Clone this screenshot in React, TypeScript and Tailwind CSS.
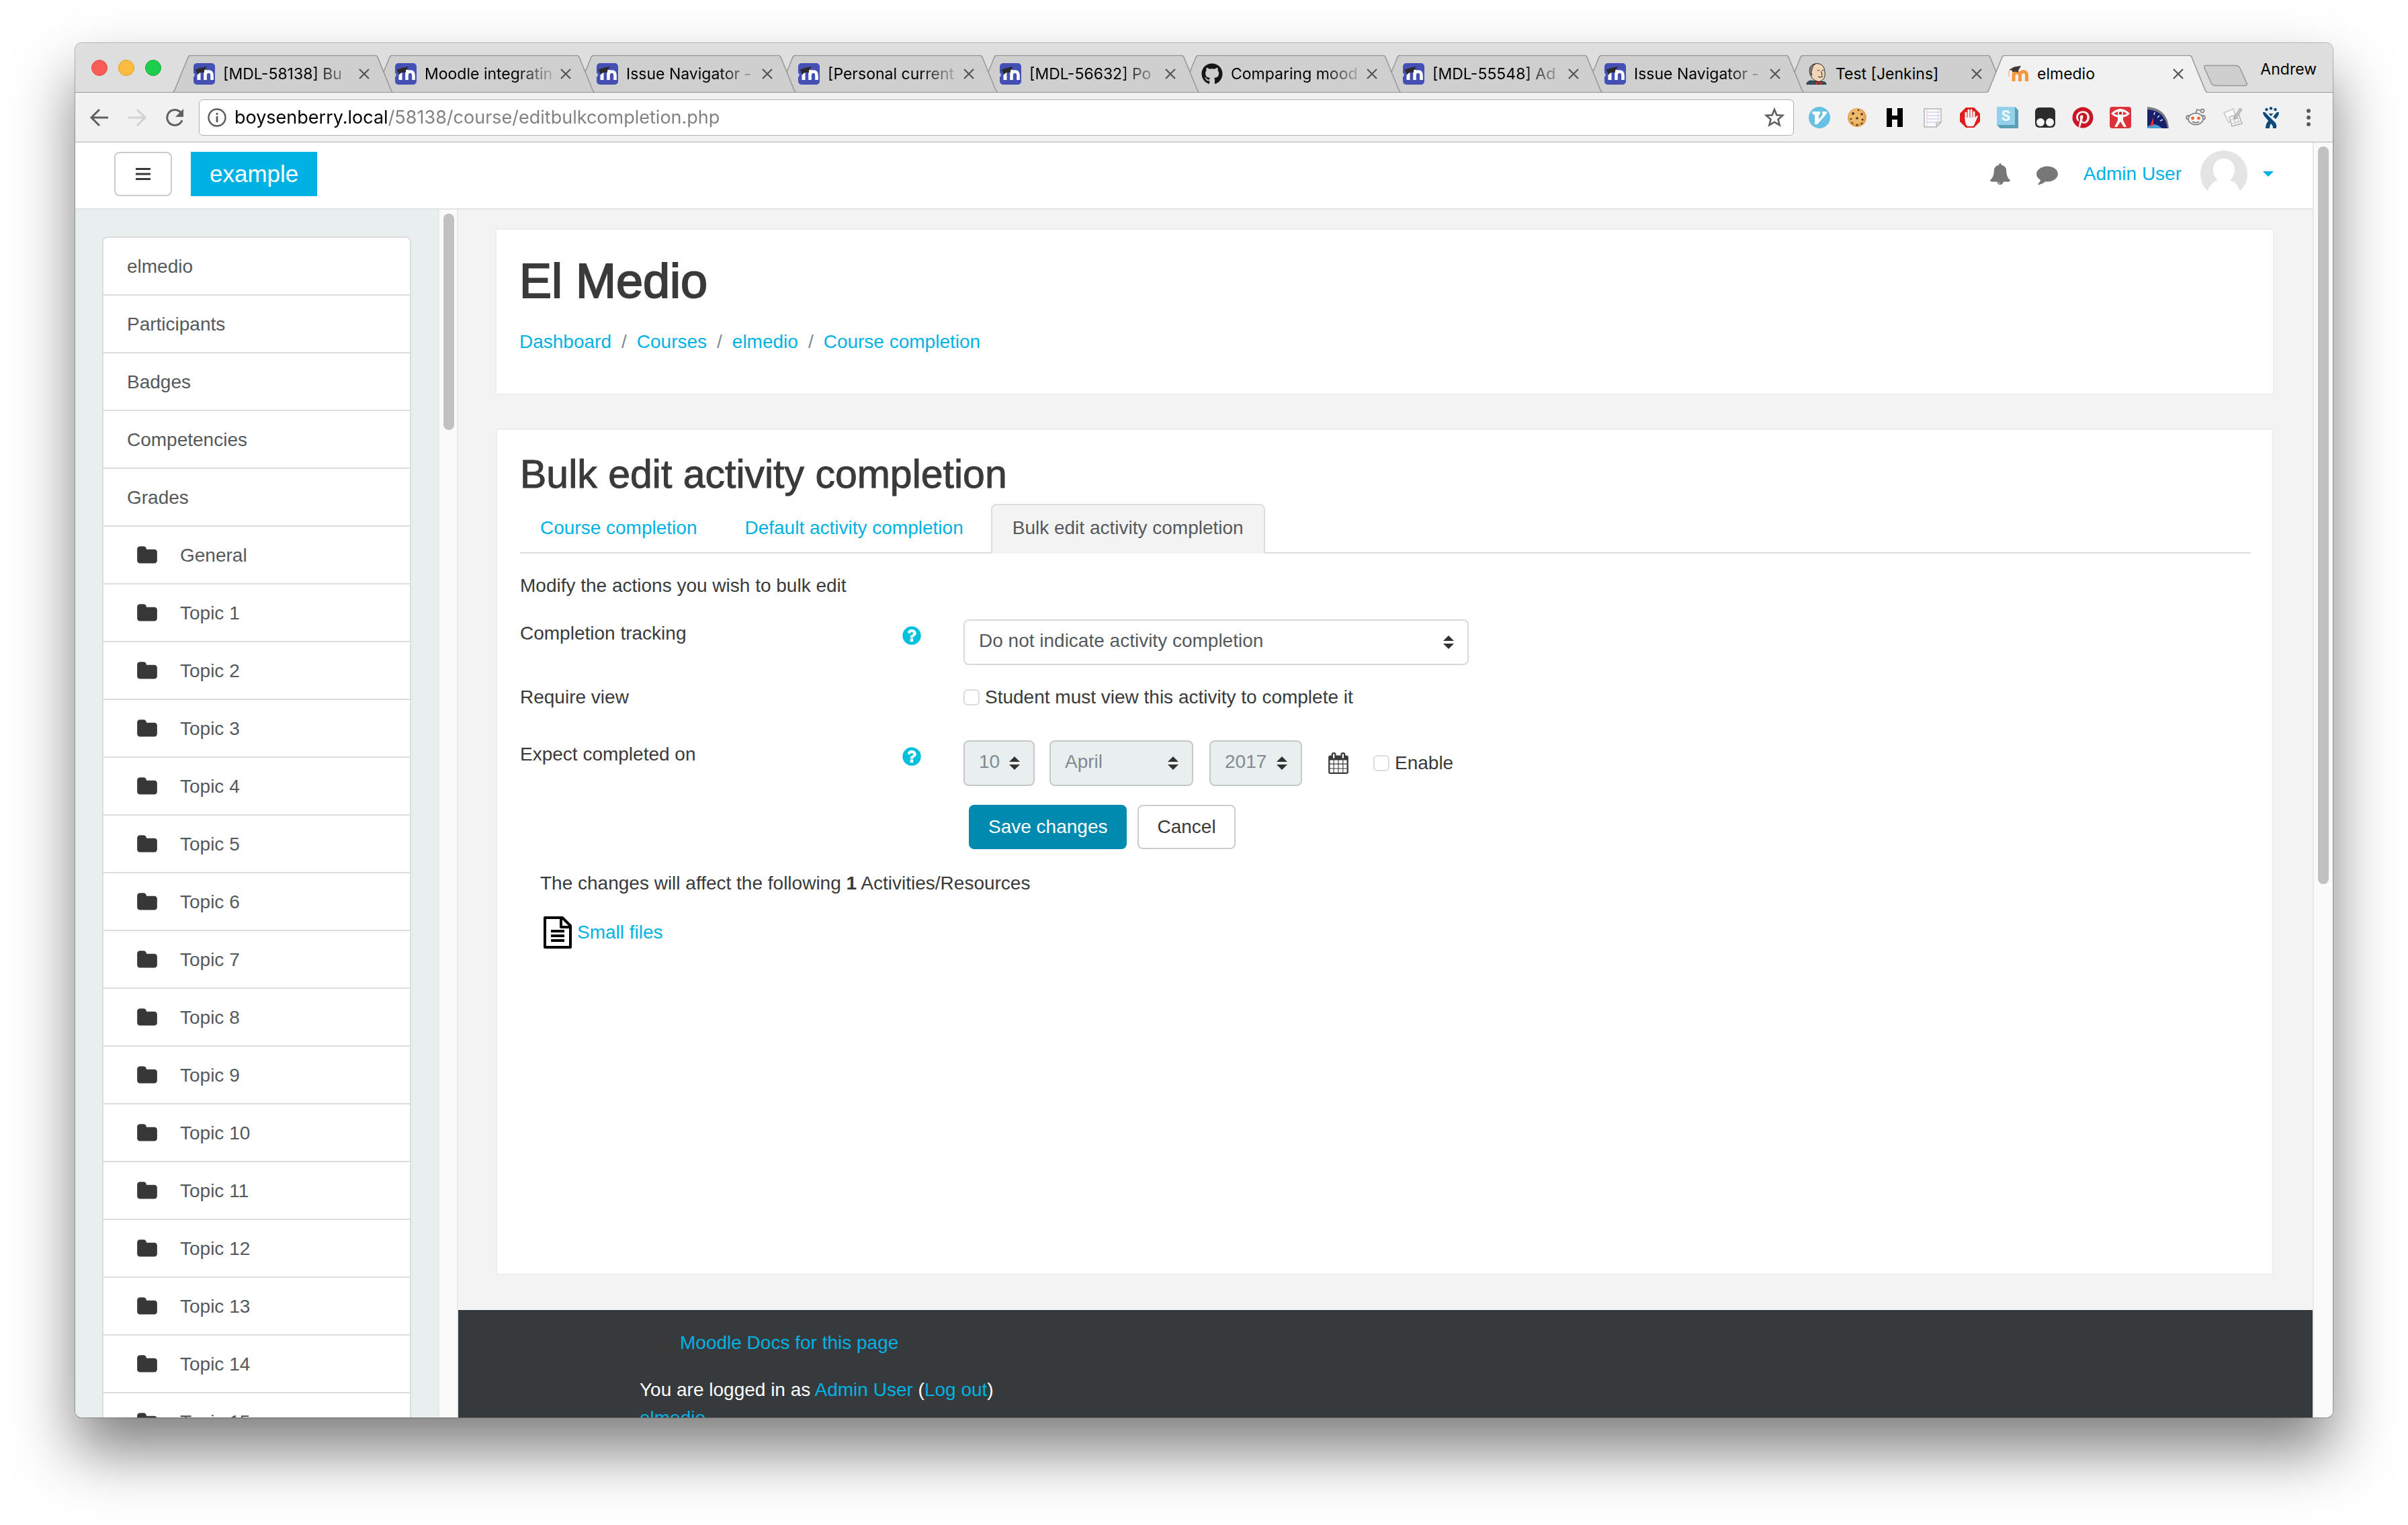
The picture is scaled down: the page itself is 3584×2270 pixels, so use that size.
import type { ReactNode } from 'react';
import { FaGithub, FaPinterest } from 'react-icons/fa';

const UI_FONT = "font-['Inter','Roboto',sans-serif]";

const TABS = [
  { title: '[MDL-58138] Bu', icon: 'tracker' },
  { title: 'Moodle integratin', icon: 'tracker' },
  { title: 'Issue Navigator -', icon: 'tracker' },
  { title: '[Personal current', icon: 'tracker' },
  { title: '[MDL-56632] Po', icon: 'tracker' },
  { title: 'Comparing mood', icon: 'github' },
  { title: '[MDL-55548] Ad', icon: 'tracker' },
  { title: 'Issue Navigator -', icon: 'tracker' },
  { title: 'Test [Jenkins]', icon: 'jenkins', short: true },
  { title: 'elmedio', icon: 'moodle', short: true, active: true },
];

const COURSE_LINKS = ['elmedio', 'Participants', 'Badges', 'Competencies', 'Grades'];
const SECTIONS = ['General', ...Array.from({ length: 15 }, (_, i) => `Topic ${i + 1}`)];
const BREADCRUMBS = ['Dashboard', 'Courses', 'elmedio', 'Course completion'];

/* ---------- icons ---------- */

function Glyph({ d, className }: { d: string; className?: string }) {
  return (
    <svg viewBox="0 0 1792 1792" className={`w-8 h-8 shrink-0 ${className ?? ''}`} fill="currentColor" aria-hidden="true">
      <path d={d} />
    </svg>
  );
}

const FOLDER = 'M1728 608v704q0 92-66 158t-158 66h-1216q-92 0-158-66t-66-158v-960q0-92 66-158t158-66h320q92 0 158 66t66 158v32h672q92 0 158 66t66 158z';
const BELL = 'M912 1696q0-16-16-16-59 0-101.5-42.5t-42.5-101.5q0-16-16-16t-16 16q0 73 51.5 124.5t124.5 51.5q16 0 16-16zm816-288q0 52-38 90t-90 38h-448q0 106-75 181t-181 75-181-75-75-181h-448q-52 0-90-38t-38-90q50-42 91-88t85-119.5 74.5-158.5 50-206 19.5-260q0-152 117-282.5t307-158.5q-8-19-8-39 0-40 28-68t68-28 68 28 28 68q0 20-8 39 190 28 307 158.5t117 282.5q0 139 19.5 260t50 206 74.5 158.5 85 119.5 91 88z';
const COMMENT = 'M1792 896q0 174-120 321.5t-326 233-450 85.5q-70 0-145-8-198 175-460 242-49 14-114 22-17 2-30.5-9t-17.5-29v-1q-3-4-.5-12t2-10 4.5-9.5l6-9 7-8.5 8-9q7-8 31-34.5t34.5-38 31-39.5 32.5-51 27-59 26-76q-157-89-247.5-220t-90.5-281q0-130 71-248.5t191-204.5 286-136.5 348-50.5q244 0 450 85.5t326 233 120 321.5z';
const HELP = 'M1024 1376v-192q0-14-9-23t-23-9h-192q-14 0-23 9t-9 23v192q0 14 9 23t23 9h192q14 0 23-9t9-23zm256-672q0-88-55.5-163t-138.5-116-170-41q-243 0-371 213-15 24 8 42l132 100q7 6 19 6 16 0 25-12 53-68 86-92 34-24 86-24 48 0 85.5 26t37.5 59q0 38-20 61t-68 45q-63 28-115.5 86.5t-52.5 125.5v36q0 14 9 23t23 9h192q14 0 23-9t9-23q0-19 21.5-49.5t54.5-49.5q32-18 49-28.5t46-35 44.5-48 28-60.5 12.5-81zm384 192q0 209-103 385.5t-279.5 279.5-385.5 103-385.5-103-279.5-279.5-103-385.5 103-385.5 279.5-279.5 385.5-103 385.5 103 279.5 279.5 103 385.5z';
const CALENDAR = 'M192 1664h288v-288h-288v288zm352 0h320v-288h-320v288zm-352-352h288v-320h-288v320zm352 0h320v-320h-320v320zm-352-384h288v-288h-288v288zm736 736h320v-288h-320v288zm-384-736h320v-288h-320v288zm768 736h288v-288h-288v288zm-384-352h320v-320h-320v320zm-352-864v-288q0-13-9.5-22.5t-22.5-9.5h-64q-13 0-22.5 9.5t-9.5 22.5v288q0 13 9.5 22.5t22.5 9.5h64q13 0 22.5-9.5t9.5-22.5zm736 864h288v-320h-288v320zm-384-384h320v-288h-320v288zm384 0h288v-288h-288v288zm32-480v-288q0-13-9.5-22.5t-22.5-9.5h-64q-13 0-22.5 9.5t-9.5 22.5v288q0 13 9.5 22.5t22.5 9.5h64q13 0 22.5-9.5t9.5-22.5zm384-64v1280q0 52-38 90t-90 38h-1408q-52 0-90-38t-38-90v-1280q0-52 38-90t90-38h128v-96q0-66 47-113t113-47h64q66 0 113 47t47 113v96h384v-96q0-66 47-113t113-47h64q66 0 113 47t47 113v96h128q52 0 90 38t38 90z';

function Svg32({ children }: { children: ReactNode }) {
  return <svg viewBox="0 0 32 32" className="w-8 h-8 shrink-0" aria-hidden="true">{children}</svg>;
}

function TrackerIcon() {
  return (
    <Svg32>
      <rect width="32" height="32" rx="5" fill="#4550b5" />
      <rect x="5.500" y="14" width="5" height="11" fill="#fff" />
      <path d="M17.500 25V10M17.500 18.500q0-6 5-6t5 6V25" fill="none" stroke="#fff" strokeWidth="4.600" />
      <rect x="0" y="15" width="1.500" height="5" fill="#c9cdf0" />
      <path d="M2 10 10 7l10-2-4 6v3q-6-1-9 2l-1 2-2-6z" fill="#2c2a2c" />
    </Svg32>
  );
}

function MoodleIcon() {
  return (
    <Svg32>
      <path d="M9 27V17.500a5 5 0 0 1 9.500 0V27M18.500 17.500a5 5 0 0 1 10 0V27" fill="none" stroke="#f7963a" strokeWidth="5" />
      <path d="M2 10 10 5.500 20 4l-4 7v3q-5-3-9 0v-3z" fill="#3f3a38" />
      <path d="M3 11q-2 5-1 9" fill="none" stroke="#f3c3a8" strokeWidth="2" />
    </Svg32>
  );
}

function JenkinsIcon() {
  return (
    <Svg32>
      <path d="M1 32q0-5 6-6l7 1h7l7 1q2 1 2 4z" fill="#335061" stroke="#1d2a33" />
      <path d="M6 15Q4 1 16 .500q11 0 12 12 1 8-2 11-5 6-11 3Q8 24 6 15z" fill="#f0d6b7" stroke="#2b2320" />
      <path d="M6 17Q2 3 14 1q-5 4-5 9l-1 3 1 5z" fill="#807d7b" stroke="#2b2320" strokeWidth=".8" />
      <path d="M17 11q2-1 3 0M24 11q1-1 2 0M22 12q3 4 1 6M18 20q4 2 7-1" fill="none" stroke="#4b3b30" strokeWidth="1.200" />
      <path d="M14 27l5 2 5-2v5l-5-2-5 2z" fill="#d33833" stroke="#7a1512" strokeWidth=".6" />
    </Svg32>
  );
}

function Favicon({ name }: { name: string }) {
  if (name === 'github') return <FaGithub className="w-8 h-8 shrink-0 text-[#161514]" />;
  if (name === 'jenkins') return <JenkinsIcon />;
  if (name === 'moodle') return <MoodleIcon />;
  return <TrackerIcon />;
}

const EXTENSIONS: { name: string; art: ReactNode }[] = [
  {
    name: 'Vimium',
    art: (
      <>
        <circle cx="16" cy="16" r="16" fill="#66c1e4" />
        <path d="M5 7h12v4l-2 1v7l6-8-1-1V7h7v3L13 26H9V12L6 11z" fill="#fff" />
      </>
    ),
  },
  {
    name: 'Cookies',
    art: (
      <>
        <circle cx="16" cy="16" r="14" fill="#e2a355" />
        <circle cx="15" cy="14" r="11" fill="#eeb96d" />
        <g fill="#5a3418">
          <circle cx="10" cy="10" r="2" /><circle cx="18" cy="5" r="1.300" /><circle cx="23" cy="11" r="1.800" />
          <circle cx="16" cy="17" r="1.800" /><circle cx="7" cy="18" r="1.300" /><circle cx="24" cy="19" r="1.500" />
          <circle cx="16" cy="27" r="1.600" /><circle cx="9" cy="24" r="1.300" /><circle cx="23" cy="25" r="1.300" />
        </g>
      </>
    ),
  },
  { name: 'Highlighter', art: <path d="M4 2h8v11h8V2h8v28h-8V19h-8v11H4z" fill="#000" /> },
  {
    name: 'Notes',
    art: (
      <>
        <path d="M4 3h25v20l-7 7H4z" fill="#fbfbfd" stroke="#b4b4b4" strokeWidth="1.500" />
        <path d="M7 8h20M7 13h20M7 18h20M7 23h14" stroke="#b9c6e6" />
        <path d="M8 3v27M25 3v20" stroke="#f0c5d4" />
        <path d="M29 23h-7v7z" fill="#dedede" stroke="#a9a9a9" />
      </>
    ),
  },
  {
    name: 'Ad blocker',
    art: (
      <>
        <path d="M10 1h12l9 9v12l-9 9H10l-9-9V10z" fill="#e01c1c" />
        <path d="M10 9v9M14 5v12M18 5v12M22 8v12" stroke="#f4f4f4" strokeWidth="3" strokeLinecap="round" />
        <path d="M8.500 16h15l3-3q2 0 1 2l-4 9q-1 4-3 5h-8q-4-2-4-13z" fill="#f4f4f4" />
      </>
    ),
  },
  {
    name: 'Stylish',
    art: (
      <>
        <path d="M0 0h27l5 5v27H5l-5-5z" fill="#5b9fb2" />
        <path d="M0 0h27v27H0z" fill="#93d1ea" />
        <text x="13.500" y="21" textAnchor="middle" fontSize="22" fontWeight="900" fontFamily="Roboto, sans-serif" fill="#e8f8fe">S</text>
      </>
    ),
  },
  {
    name: 'Tampermonkey',
    art: (
      <>
        <rect x="1" y="1" width="30" height="30" rx="6" fill="#2b2b2b" />
        <circle cx="9" cy="23" r="6" fill="#f5f5f5" />
        <circle cx="23" cy="23" r="6" fill="#f5f5f5" />
      </>
    ),
  },
  { name: 'Pinterest', art: <FaPinterest size={32} color="#cb1527" /> },
  {
    name: 'Web inspector',
    art: (
      <>
        <rect width="32" height="32" rx="4" fill="#dc3338" />
        <path d="M2 10Q16-4 30 10q-5 5-10 5.500V20l5 10h-4l-5-8-5 8H7l5-10v-4.500Q7 15 2 10z" fill="#fff" />
        <path d="M6 10q10-7 20 0-10 6-20 0z" fill="#dc3338" />
        <circle cx="16" cy="9.500" r="4" fill="#fff" />
        <circle cx="16" cy="9.500" r="2.300" fill="#c11d22" />
      </>
    ),
  },
  {
    name: 'Page speed',
    art: (
      <>
        <path d="M0 0q30 2 32 32H0z" fill="#777c84" />
        <path d="M0 4q26 1 30 28H0z" fill="#19206b" />
        <path d="M0 30q10-9 22 2H0z" fill="#4a9fd6" />
        <path d="M11 8l-1 4M18 13l-3 3M23 19l-4 2" stroke="#d6dcf4" strokeWidth="1.600" />
        <path d="M9 15 4 29l5-1z" fill="#ef2b3c" />
      </>
    ),
  },
  {
    name: 'Reddit',
    art: (
      <>
        <g fill="#f6f6f6" stroke="#8a8a8a" strokeWidth="1.800">
          <circle cx="5" cy="16" r="3" /><circle cx="27" cy="16" r="3" />
          <path d="M16 10 18 4l6 2" fill="none" />
          <circle cx="26" cy="6" r="2.500" />
          <ellipse cx="16" cy="18" rx="11" ry="8.500" />
        </g>
        <circle cx="11.500" cy="17" r="2.400" fill="#f2623a" />
        <circle cx="20.500" cy="17" r="2.400" fill="#f2623a" />
        <path d="M11 22q5 3 10 0" fill="none" stroke="#777" strokeWidth="1.500" />
      </>
    ),
  },
  {
    name: 'Form editor',
    art: (
      <>
        <path d="M2 9 16 3l4 12-11 8z" fill="#fafafa" stroke="#bdbdbd" strokeWidth="1.300" />
        <path d="M10 15 24 11l5 14-15 4z" fill="#f3f3f3" stroke="#ababab" strokeWidth="1.300" />
        <path d="M11 20 27 16M13 25 28 21M16 14l4 14M21 13l4 14" stroke="#c4c4c4" />
        <path d="M26 2l3 2-9 13-3 1 1-4z" fill="#c9c9c9" stroke="#989898" />
      </>
    ),
  },
  {
    name: 'JIRA',
    art: (
      <g fill="#0a4a7c">
        <circle cx="9.500" cy="4" r="2.200" /><circle cx="16" cy="2.200" r="2.200" /><circle cx="22.500" cy="4" r="2.200" />
        <path d="M4 8q3-1 5 2l14 14q2 4 1 8h-5q0-5-4-8L8 16Q4 12 4 8z" />
        <path d="M28 8q-3-1-5 2l-4 5 4 3q5-5 5-10zM13 20l4 4q-3 3-3 8H8q0-7 5-12zM12.500 10h7L16 14z" />
      </g>
    ),
  },
];

/* ---------- browser frame ---------- */

function BrowserTab({ tab, index }: { tab: (typeof TABS)[number]; index: number }) {
  return (
    <div
      className="relative flex items-center w-[330px] h-14 -ml-[30px] pl-8 pr-9 shrink min-w-0"
      style={{ zIndex: tab.active ? 20 : TABS.length - index }}
    >
      <svg viewBox="0 0 330 56" preserveAspectRatio="none" className="absolute inset-0 w-full h-full" aria-hidden="true">
        <path
          d="M0 56Q3 55 4 52L24 3Q25 .500 28 .500H302Q305 .500 306 3L326 52Q327 55 330 56Z"
          fill={tab.active ? '#f1f1f1' : '#cfcfcf'}
        />
        <path d="M0 56Q3 55 4 52L24 3Q25 .500 28 .500H302Q305 .500 306 3L326 52Q327 55 330 56" fill="none" stroke="#979797" strokeWidth="1.500" />
      </svg>
      <div className="relative flex items-center w-full min-w-0">
        <Favicon name={tab.icon} />
        <span
          className={
            tab.short
              ? 'ml-3 flex-1 min-w-0 whitespace-nowrap'
              : 'ml-3 flex-1 min-w-0 whitespace-nowrap [mask-image:linear-gradient(to_right,#000_136px,transparent_200px)]'
          }
        >
          {tab.title}
        </span>
        <button type="button" aria-label={`Close ${tab.title}`} className="ml-2 w-4 h-4 shrink-0">
          <svg viewBox="0 0 16 16" className="w-4 h-4" stroke="#555" strokeWidth="2.200">
            <path d="M1 1 15 15M15 1 1 15" />
          </svg>
        </button>
      </div>
    </div>
  );
}

function TabStrip() {
  return (
    <div className={`relative flex items-end h-[74px] bg-[#dedede] text-[23px] leading-8 text-black ${UI_FONT}`}>
      <div className="flex items-center self-center gap-4 pl-6 pr-4 shrink-0">
        <span className="w-6 h-6 rounded-full bg-[#fc5b57] border border-[#e2463f]" />
        <span className="w-6 h-6 rounded-full bg-[#fdbc40] border border-[#dfa023]" />
        <span className="w-6 h-6 rounded-full bg-[#1dcd4e] border border-[#12ac28]" />
      </div>
      <div className="flex min-w-0 pl-[30px]">
        {TABS.map((tab, i) => <BrowserTab key={i} tab={tab} index={i} />)}
      </div>
      <button type="button" aria-label="New tab" className="self-end mb-2 -ml-2 shrink-0">
        <svg viewBox="0 0 68 34" className="block w-[68px] h-[34px]">
          <path d="M5 1.500H50q4 0 6 4l10 22q1 4-2 4H20q-5 0-7-4L3 5Q2 1.500 5 1.500z" fill="#cfcfcf" stroke="#989898" strokeWidth="1.500" />
        </svg>
      </button>
      <button type="button" className="ml-auto mr-6 self-center mt-1">Andrew</button>
      <div className="absolute inset-x-0 bottom-0 h-px bg-[#979797] z-[15]" />
    </div>
  );
}

function Toolbar() {
  return (
    <div className={`flex items-center h-[74px] bg-[#f1f1f1] border-b border-[#b4b4b4] pl-5 ${UI_FONT}`}>
      <div className="flex items-center gap-6 shrink-0">
        <button type="button" aria-label="Back">
          <svg viewBox="0 0 32 32" className="w-8 h-8" fill="none" stroke="#606060" strokeWidth="3"><path d="M29 16H5M16 4 4 16l12 12" /></svg>
        </button>
        <button type="button" aria-label="Forward">
          <svg viewBox="0 0 32 32" className="w-8 h-8" fill="none" stroke="#d2d2d2" strokeWidth="3"><path d="M3 16h24M16 4l12 12-12 12" /></svg>
        </button>
        <button type="button" aria-label="Reload">
          <svg viewBox="0 0 32 32" className="w-8 h-8">
            <path d="M25 8.500A11.500 11.500 0 1 0 27 20" fill="none" stroke="#606060" strokeWidth="3" />
            <path d="M29 3v12H17z" fill="#606060" />
          </svg>
        </button>
      </div>
      <div className="flex items-center flex-1 min-w-0 h-[54px] ml-5 px-3 bg-white border border-[#b0b0b0] rounded-md">
        <svg viewBox="0 0 28 28" className="w-7 h-7 shrink-0" fill="none" stroke="#5a5a5a" strokeWidth="2.400" aria-hidden="true">
          <circle cx="14" cy="14" r="12.500" />
          <path d="M14 12v9M14 7v3" strokeWidth="2.800" />
        </svg>
        <input
          type="text"
          aria-label="Address"
          defaultValue="boysenberry.local/58138/course/editbulkcompletion.php"
          className="flex-1 min-w-0 ml-3 text-[27px] leading-9 outline-none text-transparent bg-clip-text bg-[linear-gradient(to_right,#000_227px,#808080_227px)]"
        />
        <button type="button" aria-label="Bookmark" className="shrink-0">
          <svg viewBox="0 0 32 32" className="w-8 h-8" fill="none" stroke="#5f5f5f" strokeWidth="2.600">
            <path d="M16 4l3.400 8.200 8.800.700-6.700 5.800 2.100 8.600L16 22.700l-7.600 4.600 2.100-8.600-6.700-5.800 8.800-.700z" />
          </svg>
        </button>
      </div>
      <div className="flex items-center gap-6 ml-[22px] mr-5 shrink-0">
        {EXTENSIONS.map(ext => (
          <button key={ext.name} type="button" aria-label={ext.name}><Svg32>{ext.art}</Svg32></button>
        ))}
        <button type="button" aria-label="Menu">
          <Svg32>
            <g fill="#5a5a5a"><circle cx="16" cy="6" r="3" /><circle cx="16" cy="16" r="3" /><circle cx="16" cy="26" r="3" /></g>
          </Svg32>
        </button>
      </div>
    </div>
  );
}

/* ---------- page ---------- */

function Navbar() {
  return (
    <header className="flex items-center h-[100px] bg-white border-b-2 border-[#e4e4e4] pb-1 pl-[58px] pr-[58px] shrink-0">
      <button type="button" aria-label="Side panel" className="flex items-center justify-center w-[86px] h-[66px] border-2 border-[#ccc] rounded-lg">
        <svg viewBox="0 0 22 20" className="w-[22px] h-5" fill="#373a3c"><path d="M0 1h22v3H0zM0 8.500h22v3H0zM0 16h22v3H0z" /></svg>
      </button>
      <a href="#" className="ml-7 px-7 h-[66px] leading-[66px] bg-[#00b2e3] text-white text-[35px]">example</a>
      <div className="flex items-center ml-auto text-[#777]">
        <button type="button" aria-label="Notifications"><Glyph d={BELL} /></button>
        <button type="button" aria-label="Messages" className="ml-[38px]"><Glyph d={COMMENT} /></button>
        <a href="#" className="ml-[38px] text-[#00b2e3]">Admin User</a>
        <svg viewBox="0 0 70 70" className="w-[70px] h-[70px] ml-7" aria-hidden="true">
          <circle cx="35" cy="35" r="35" fill="#e4e4e4" />
          <path d="M35 12c-10 0-16 7-16 17 0 7 3 12 7 15-8 3-12 8-15 16q10 10 24 10t24-10c-3-8-7-13-15-16 4-3 7-8 7-15 0-10-6-17-16-17z" fill="#fff" />
        </svg>
        <svg viewBox="0 0 16 8" className="w-4 h-2 ml-[23px]" fill="#00b2e3" aria-hidden="true"><path d="M0 0h16L8 8z" /></svg>
      </div>
    </header>
  );
}

function Sidebar() {
  return (
    <aside className="flex w-[570px] shrink-0 bg-[#e9eeef]">
      <nav className="flex-1 px-10 pt-10 text-[#55595c]">
        <ul className="bg-white border-2 border-[#ddd] rounded-t-lg">
          {COURSE_LINKS.map(name => (
            <li key={name} className="border-b-2 border-[#ddd]">
              <a href="#" className="block pl-[35px] pt-[22px] pb-5">{name}</a>
            </li>
          ))}
          {SECTIONS.map(name => (
            <li key={name} className="border-b-2 border-[#ddd]">
              <a href="#" className="flex items-center pl-[49px] pt-[22px] pb-5 gap-[33px]">
                <Glyph d={FOLDER} className="text-[#373737]" />
                {name}
              </a>
            </li>
          ))}
        </ul>
      </nav>
      <div className="w-[30px] bg-[#fafafa] border-x-2 border-[#e9e9e9] pt-1.5 pl-1.5">
        <div className="w-4 h-[322px] rounded-full bg-[#c1c1c1]" />
      </div>
    </aside>
  );
}

function Help({ topic }: { topic: string }) {
  return (
    <button type="button" aria-label={`Help with ${topic}`} className="mt-2 text-[#00c0e0]">
      <Glyph d={HELP} />
    </button>
  );
}

function Select({ id, label, value, className, disabled }: { id: string; label?: string; value: string; className: string; disabled?: boolean }) {
  return (
    <div className={`relative ${className}`}>
      <select
        id={id}
        aria-label={label}
        disabled={disabled}
        className="appearance-none w-full h-[68px] pl-[21px] pb-1 bg-white text-[#55595c] border-2 border-[#d9d9d9] rounded-lg disabled:bg-[#e9eeef] disabled:text-[#818a91] disabled:border-[#c6c9ca] disabled:opacity-100"
      >
        <option>{value}</option>
      </select>
      <svg viewBox="0 0 16 20" className="absolute right-[22px] top-6 w-4 h-5 pointer-events-none" fill="#333" aria-hidden="true">
        <path d="M8 0l8 8H0zM8 20l8-8H0z" />
      </svg>
    </div>
  );
}

const CHECKBOX = 'appearance-none w-6 h-6 shrink-0 bg-white border-2 border-[#dcdcdc] rounded-md';

function CompletionForm() {
  return (
    <form className="mt-[29px]" onSubmit={e => e.preventDefault()}>
      <div className="flex items-start">
        <div className="flex items-start justify-between w-[660px] pr-[61px] shrink-0">
          <label htmlFor="tracking">Completion tracking</label>
          <Help topic="Completion tracking" />
        </div>
        <Select id="tracking" value="Do not indicate activity completion" className="w-[752px]" />
      </div>

      <div className="flex items-start mt-[27px]">
        <span className="w-[660px] shrink-0">Require view</span>
        <label className="flex items-center gap-2">
          <input type="checkbox" className={CHECKBOX} />
          Student must view this activity to complete it
        </label>
      </div>

      <div className="flex items-start mt-[43px]">
        <div className="flex items-start justify-between w-[660px] pr-[61px] shrink-0">
          <span>Expect completed on</span>
          <Help topic="Expect completed on" />
        </div>
        <div className="flex items-center">
          <Select id="day" label="Day" value="10" disabled className="w-[106px]" />
          <Select id="month" label="Month" value="April" disabled className="w-[214px] ml-[22px]" />
          <Select id="year" label="Year" value="2017" disabled className="w-[138px] ml-6" />
          <button type="button" aria-label="Calendar" className="ml-[38px]"><Glyph d={CALENDAR} /></button>
          <label className="flex items-center gap-2 ml-9">
            <input type="checkbox" className={CHECKBOX} />
            Enable
          </label>
        </div>
      </div>

      <div className="flex gap-4 mt-7 pl-[668px]">
        <button type="submit" className="h-[66px] px-[29px] bg-[#008ab0] text-white rounded-lg">Save changes</button>
        <button type="button" className="h-[66px] px-[27px] bg-white border-2 border-[#ccc] rounded-lg">Cancel</button>
      </div>
    </form>
  );
}

function Main() {
  return (
    <main className="flex-1 min-w-0 bg-[#f3f3f3]">
      <div className="pt-7 pl-[55px] pr-[57px]">
        <div className="bg-white border-2 border-[#eee] pt-9 pl-[34px] pr-8 pb-14">
          <h1 className="text-[72px] leading-[80px] [-webkit-text-stroke:2px_currentColor]">El Medio</h1>
          <nav aria-label="Breadcrumb" className="mt-[30px]">
            <ol className="flex gap-[15px]">
              {BREADCRUMBS.map((name, i) => (
                <li key={name} className="flex gap-[15px]">
                  {i > 0 && <span className="text-[#818a91]">/</span>}
                  <a href="#" className="text-[#00b2e3]">{name}</a>
                </li>
              ))}
            </ol>
          </nav>
        </div>

        <section className="mt-[50px] mx-px min-h-[1260px] bg-white border-2 border-[#eee] pt-[34px] pl-[34px] pr-8">
          <h2 className="text-[59px] leading-[64px] [-webkit-text-stroke:1px_currentColor]">Bulk edit activity completion</h2>
          <nav className="flex gap-[11px] mt-3 border-b-2 border-[#ddd] text-[#00b2e3]">
            <a href="#" className="px-[30px] py-[15px]">Course completion</a>
            <a href="#" className="px-[30px] py-[15px]">Default activity completion</a>
            <a href="#" className="px-[30px] pt-[13px] pb-[17px] -mb-0.5 bg-[#f3f3f3] text-[#55595c] border-2 border-b-0 border-[#ddd] rounded-t-lg">Bulk edit activity completion</a>
          </nav>
          <p className="mt-[27px]">Modify the actions you wish to bulk edit</p>
          <CompletionForm />
          <p className="mt-[30px] pl-[30px]">
            The changes will affect the following <b>1</b> Activities/Resources
          </p>
          <div className="flex items-center mt-7 pl-[35px]">
            <svg viewBox="0 0 42 48" className="w-[42px] h-12" fill="none" stroke="#000" strokeWidth="4" strokeLinejoin="round" aria-hidden="true">
              <path d="M2 2h26l12 12v32H2z" />
              <path d="M26 2v14h14" />
              <path d="M11 22h20M11 29h20M11 36h20" />
            </svg>
            <a href="#" className="ml-2 text-[#00b2e3]">Small files</a>
          </div>
        </section>
      </div>

      <footer className="mt-[52px] h-[400px] bg-[#373a3c] text-white pt-7 pl-[270px]">
        <div className="flex items-center">
          <Glyph d={HELP} className="ml-4 mr-3 w-7 h-7 text-[#3b3839]" />
          <a href="#" className="text-[#00b2e3]">Moodle Docs for this page</a>
        </div>
        <p className="mt-7">
          You are logged in as <a href="#" className="text-[#00b2e3]">Admin User</a> (<a href="#" className="text-[#00b2e3]">Log out</a>)
        </p>
        <a href="#" className="text-[#00b2e3]">elmedio</a>
      </footer>
    </main>
  );
}

export default function App() {
  return (
    <div className="h-screen overflow-hidden bg-white pt-16 px-28 pb-40">
      <div className="flex flex-col h-full overflow-hidden rounded-[10px] shadow-[0_0_0_1px_rgba(0,0,0,0.25),0_50px_90px_rgba(0,0,0,0.5)]">
        <TabStrip />
        <Toolbar />
        <div className="flex flex-1 min-h-0 bg-white text-[28px] leading-[42px] text-[#3a3a3a] font-['Liberation_Sans',Arial,sans-serif]">
          <div className="flex flex-col flex-1 min-w-0">
            <Navbar />
            <div className="flex flex-1 min-h-0 overflow-hidden">
              <Sidebar />
              <Main />
            </div>
          </div>
          <div className="w-[30px] shrink-0 bg-[#fafafa] border-l-2 border-[#e8e8e8] pt-1.5 pl-1.5">
            <div className="w-4 h-[1098px] rounded-full bg-[#c1c1c1]" />
          </div>
        </div>
      </div>
    </div>
  );
}
